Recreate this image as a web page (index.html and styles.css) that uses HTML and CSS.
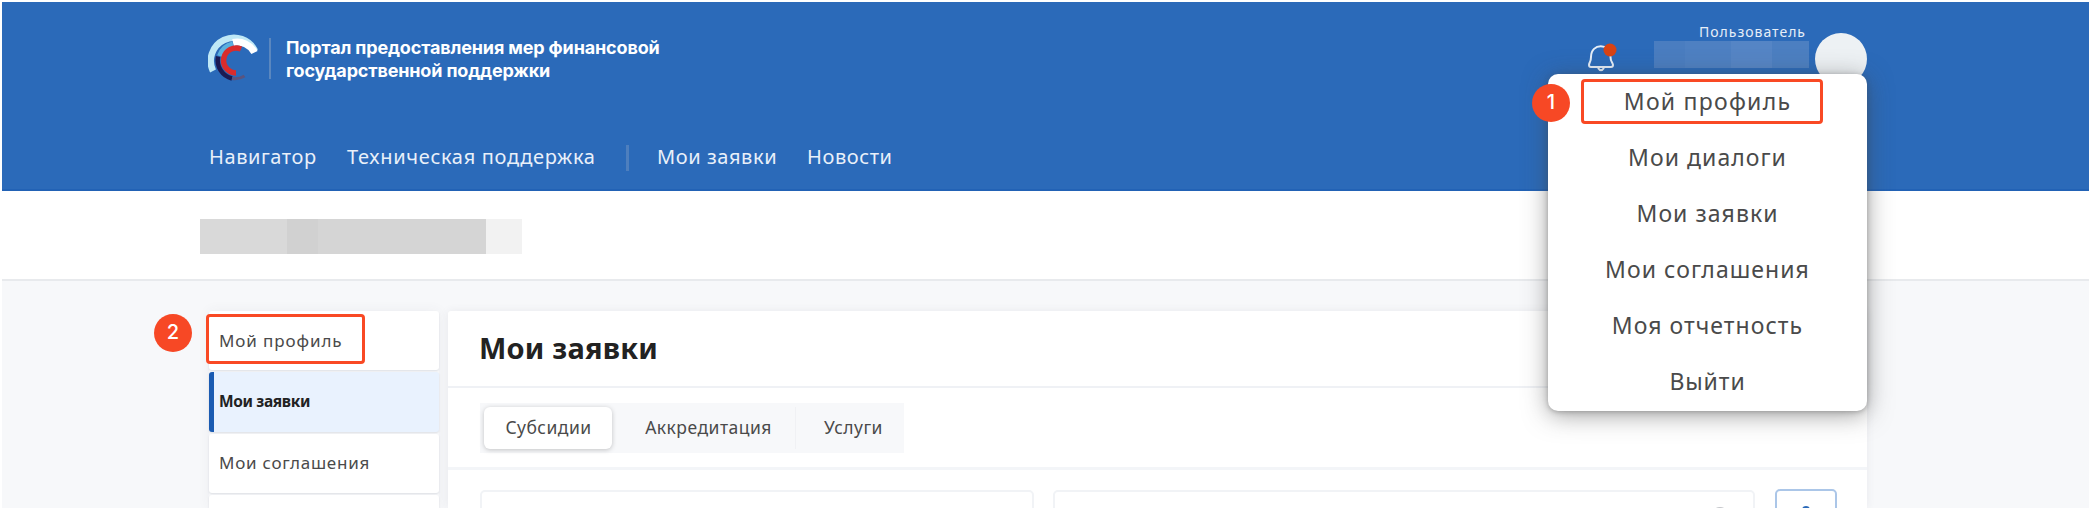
FILE: index.html
```html
<!DOCTYPE html>
<html lang="ru">
<head>
<meta charset="utf-8">
<title>Мои заявки</title>
<link rel="stylesheet" href="styles.css">
</head>
<body>
<div class="page">
  <header class="header">
    <div class="header-top">
      <div class="brand">
        <svg class="logo" width="52" height="50" viewBox="0 0 52 50" fill="none">
          <path d="M5 38A22 22 0 0 1 47 18" stroke="#bfe8f6" stroke-width="6.500"/>
          <path d="M25 9.500A19.500 19.500 0 0 1 46.500 19.500" stroke="#fff" stroke-width="7"/>
          <path d="M11.500 23A18 18 0 0 1 25 11" stroke="#5bb0de" stroke-width="5"/>
          <path d="M10 23.500A19 19 0 0 0 24 45.500" stroke="#1b1a52" stroke-width="4.500"/>
          <path d="M24 45.500A18.500 18.500 0 0 0 36.500 43" stroke="#59547f" stroke-width="3"/>
          <path d="M33 16A12.500 12.500 0 1 0 28 40" stroke="#d92c2c" stroke-width="5.500"/>
        </svg>
        <span class="brand-line"></span>
        <p class="brand-name">Портал предоставления мер финансовой<br>государственной поддержки</p>
      </div>
      <div class="account">
        <svg class="bell" width="32" height="32" viewBox="0 0 32 32" fill="none" stroke="#e6eef8" stroke-width="2">
          <path d="M6 15C6 .5 25.500 .5 25.500 15C25.500 20 28 20.500 28 23Q28 25 26 25H6Q4 25 4 23C4 20.500 6 20 6 15Z"/>
          <path d="M13 26Q16 30.500 19 26"/>
          <circle cx="25" cy="8" r="6.500" fill="#d84315" stroke="none"/>
        </svg>
        <div class="user"><span class="user-role">Пользователь</span><span class="user-name"><i></i><i></i><i></i><i></i></span></div>
        <span class="avatar"></span>
      </div>
    </div>
    <nav class="nav"><a class="n1">Навигатор</a><a class="n2">Техническая поддержка</a><span class="nav-line"></span><a class="n3">Мои заявки</a><a class="n4">Новости</a></nav>
  </header>
  <section class="subheader"><div class="masked"><i></i><i></i><i></i><i></i></div></section>
  <div class="content">
    <aside class="sidebar">
      <a class="side-item">Мой профиль</a>
      <a class="side-item active">Мои заявки</a>
      <a class="side-item s3">Мои соглашения</a>
      <a class="side-item"></a>
    </aside>
    <main class="main">
      <h1 class="title">Мои заявки</h1>
      <div class="tabs-row"><div class="tabs"><a class="tab selected">Субсидии</a><a class="tab t2">Аккредитация</a><a class="tab t3">Услуги</a></div></div>
      <div class="filters">
        <div class="field wide"></div>
        <div class="field search"><svg width="20" height="20" viewBox="0 0 20 20" fill="none" stroke="#c4c6ca" stroke-width="2"><circle cx="9" cy="9" r="8"/></svg></div>
        <div class="gear"><svg width="26" height="26" viewBox="0 0 26 26" fill="#2b69b8"><circle cx="13" cy="4" r="4"/></svg></div>
      </div>
    </main>
  </div>
  <div class="menu">
    <a class="m1">Мой профиль</a><a>Мои диалоги</a><a>Мои заявки</a><a>Мои соглашения</a><a>Моя отчетность</a><a class="m6">Выйти</a>
  </div>
  <span class="frame frame-menu"></span>
  <span class="frame frame-side"></span>
  <span class="badge badge-1">1</span>
  <span class="badge badge-2">2</span>
</div>
</body>
</html>
```
FILE: styles.css
```css
* { box-sizing: border-box; }
body { margin: 0; background: #fff; font-family: "Noto Sans", sans-serif; color: #4a4a4a; overflow: hidden; }
.page { position: relative; width: 2090px; height: 508px; padding: 2px 1px 0 2px; overflow: hidden; }
a, .user-role { white-space: nowrap; }
.header { height: 189px; background: #2b6ab9; border-bottom: 2px solid #2262b5; padding-left: 206px; color: #fff; }
.header-top { display: flex; justify-content: space-between; height: 129px; padding-right: 222px; }
.brand { display: flex; align-items: flex-start; padding-top: 31px; }
.brand-line { width: 2px; height: 41px; margin: 5px 15px 0 9px; background: #5a87bf; }
.logo { width: 52px; }
.brand-name { margin: 3px 0 0; font: 700 18px/23px Inter, sans-serif; letter-spacing: -.15px; white-space: nowrap; }
.account { display: flex; }
.bell { margin: 40px 37px 0 0; }
.user { width: 155px; margin-right: 6px; padding-top: 20px; display: flex; flex-direction: column; }
.user-role { font-size: 14px; line-height: 19px; letter-spacing: 1px; align-self: flex-end; margin-right: 3px; color: #e6eef8; }
.user-name { display: flex; height: 27px; }
.user-name i { background: #4a7dc0; flex: 31; }
.user-name i:nth-child(2) { background: #4e80c2; flex: 46; }
.user-name i:nth-child(3) { background: #5585c5; flex: 41; }
.user-name i:nth-child(4) { background: #4c7fc1; flex: 37; }
.avatar { width: 52px; height: 52px; margin-top: 31px; border-radius: 50%; background: #edf1f4; }
.nav { display: flex; align-items: center; height: 52px; font-size: 20px; letter-spacing: .58px; color: #e9f0f9; }
.nav a { flex: none; margin-top: -1px; }
.n1 { width: 138px; margin-left: 1px; }
.n2 { width: 279px; letter-spacing: .68px; }
.nav-line { width: 3px; height: 26px; background: #4e7fbe; margin: 2px 28px 0 0; }
.n3 { width: 150px; }
.subheader { height: 90px; border-bottom: 2px solid #e8eaed; padding: 28px 0 0 198px; }
.masked { display: flex; width: 322px; height: 35px; }
.masked i { background: #d9d9d9; flex: 87; }
.masked i:nth-child(2) { background: #d1d1d1; flex: 31; }
.masked i:nth-child(3) { background: #d5d5d5; flex: 168; }
.masked i:nth-child(4) { background: #f2f2f2; flex: 36; }
.content { display: flex; height: 227px; gap: 9px; background: #f7f8fa; padding: 30px 222px 0 207px; }
.sidebar { width: 230px; display: flex; flex-direction: column; gap: 2px; box-shadow: 0 0 12px rgba(60,70,90,.06); }
.side-item { display: flex; align-items: center; flex: none; height: 59.300px; padding: 0 0 1px 10px; background: #fff; border-radius: 3px; font-size: 17px; letter-spacing: .9px; box-shadow: 0 1px 2px rgba(40,50,70,.12); }
.side-item.active { background: #e9f2fe; border-left: 5px solid #1a5bb2; padding-left: 5px; font-weight: 700; color: #222; font-size: 15.500px; letter-spacing: -.35px; }
.side-item.s3 { letter-spacing: .75px; }
.main { flex: 1; background: #fff; border-radius: 3px 3px 0 0; box-shadow: 0 0 8px rgba(60,70,90,.08); }
.title { display: flex; align-items: center; margin: 0; height: 77px; padding: 0 0 3px 31px; border-bottom: 2px solid #eff1f5; font-size: 29px; letter-spacing: .22px; font-weight: 700; color: #222; }
.tabs-row { height: 82px; border-bottom: 3px solid #f3f5f8; padding: 15px 0 0 32px; }
.tabs { display: flex; width: 424px; height: 50px; padding: 4px; background: #f7f8fa; font-size: 17.500px; letter-spacing: .48px; }
.tab { display: flex; align-items: center; justify-content: center; flex: none; width: 128px; height: 42px; padding: 0 0 3px 1px; }
.selected { background: #fff; border-radius: 6px; box-shadow: 0 1px 5px rgba(0,0,0,.22); }
.t2 { width: 184px; border-right: 1px solid #f0f1f4; padding-left: 10px; }
.t3 { width: 104px; padding-left: 11px; }
.filters { display: flex; height: 60px; padding: 20px 0 0 32px; }
.field { height: 60px; border: 2px solid #f1f3f6; border-radius: 5px; }
.wide { width: 554px; margin-right: 19px; }
.search { width: 702px; margin-right: 20px; padding: 15px 22px 0; text-align: right; }
.gear { width: 62px; height: 60px; margin-top: -1px; border: 2px solid #abc6e8; border-radius: 5px; padding: 15px 16px; }
.menu { position: absolute; left: 1548px; top: 74px; width: 319px; height: 337px; background: #fff; border-radius: 10px; box-shadow: 0 4px 24px rgba(70,70,70,.5), 0 1px 5px rgba(70,70,70,.35); display: flex; flex-direction: column; align-items: center; font-size: 23px; line-height: 56px; letter-spacing: 1.050px; }
.menu a { margin: -1px 0 1px; }
.menu .m1 { letter-spacing: 1.250px; }
.menu .m6 { letter-spacing: .9px; }
.frame { position: absolute; border: 3px solid #f94924; border-radius: 4px; }
.frame-menu { left: 1581px; top: 79px; width: 242px; height: 45px; }
.frame-side { left: 206px; top: 314px; width: 159px; height: 50px; }
.badge { position: absolute; width: 38px; height: 38px; border-radius: 50%; background: #f74825; color: #fff; text-align: center; font: 500 20px/37px Inter, sans-serif; }
.badge-1 { left: 1532px; top: 84px; }
.badge-2 { left: 154px; top: 314px; }
```
